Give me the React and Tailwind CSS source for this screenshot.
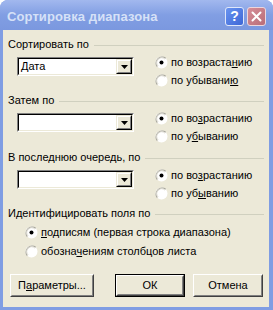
import React from "react";

function Radio({ checked }) {
  return (
    <svg width="13" height="13" viewBox="0 0 13 13" className="shrink-0">
      <circle cx="6.5" cy="6.5" r="6" fill="#ffffff" />
      <path d="M2.3 10.7 A6 6 0 0 1 10.7 2.3" fill="none" stroke="#a7a69c" strokeWidth="1.2" />
      <path d="M3.1 9.9 A4.8 4.8 0 0 1 9.9 3.1" fill="none" stroke="#dcdad0" strokeWidth="1" />
      {checked ? <circle cx="6.5" cy="6.5" r="2" fill="#000000" /> : null}
    </svg>
  );
}

function Option({ checked, children, className = "" }) {
  return (
    <div className={`flex h-[16px] items-center gap-[2px] ${className}`}>
      <Radio checked={checked} />
      <span className="pl-[1px]">{children}</span>
    </div>
  );
}

function Header({ children, className = "" }) {
  return (
    <div className={`flex h-[13px] items-center ${className}`}>
      <span className="whitespace-nowrap">{children}</span>
      <div className="ml-[5px] mt-[2px] h-px flex-1 bg-[#d0d0bf]" />
    </div>
  );
}

function Combo({ value }) {
  return (
    <div className="ml-[9px] mt-[3px] h-[19px] w-[117px] border border-t-[#808080] border-l-[#808080] border-r-white border-b-white">
      <div className="flex h-full border border-t-black border-l-black border-r-[#ece9d8] border-b-[#ece9d8] bg-white">
        <span className="flex-1 pl-[2px] leading-[15px]">{value}</span>
        <div className="h-full w-[16px] border border-t-[#ece9d8] border-l-[#ece9d8] border-r-black border-b-black">
          <div className="flex h-full items-center justify-center border border-t-white border-l-white border-r-[#808080] border-b-[#808080] bg-[#ece9d8]">
            <svg width="7" height="4" viewBox="0 0 7 4">
              <polygon points="0,0 7,0 3.5,4" fill="#000000" />
            </svg>
          </div>
        </div>
      </div>
    </div>
  );
}

function SortGroup({ value, asc, desc }) {
  return (
    <div className="mt-[3px] flex">
      <Combo value={value} />
      <div className="ml-[21px] flex flex-col gap-[2px]">
        <Option checked>{asc}</Option>
        <Option>{desc}</Option>
      </div>
    </div>
  );
}

function Button({ children, width, primary }) {
  return (
    <div className={`h-[23px] ${width} ${primary ? "border border-black" : ""}`}>
      <div className="h-full border border-t-white border-l-white border-r-[#404040] border-b-[#404040]">
        <div className="flex h-full items-center justify-center border border-t-[#ece9d8] border-l-[#ece9d8] border-r-[#808080] border-b-[#808080] bg-[#ece9d8]">
          {children}
        </div>
      </div>
    </div>
  );
}

export default function App() {
  return (
    <div className="h-[310px] w-[273px] bg-white font-['Liberation_Sans',Arial,sans-serif] text-[11px] leading-[13px] text-black">
      <div className="flex h-full flex-col rounded-t-[8px] bg-[#7f9de3]">
        <div className="flex h-[30px] items-center rounded-t-[8px] bg-gradient-to-b from-[#a2b8ee] via-[#819ee3] to-[#7b98df] pl-[7px] pr-[7px] pt-[2px]">
          <span className="flex-1 text-[13px] font-bold tracking-[0.1px] text-[#d6e1f7]">Сортировка диапазона</span>
          <div className="flex h-[19px] w-[19px] items-center justify-center rounded-[3px] border border-[#dfe7fa] bg-gradient-to-br from-[#6a94f0] to-[#3d66d6] text-[14px] font-bold text-white">
            ?
          </div>
          <div className="ml-[3px] flex h-[19px] w-[19px] items-center justify-center rounded-[3px] border border-[#ecd6dc] bg-gradient-to-br from-[#d68e98] to-[#b96d78]">
            <svg width="11" height="11" viewBox="0 0 11 11">
              <path d="M1.5 1.5 L9.5 9.5 M9.5 1.5 L1.5 9.5" stroke="#ffffff" strokeWidth="2" strokeLinecap="round" />
            </svg>
          </div>
        </div>
        <div className="mb-[3px] ml-[3px] mr-[4px] flex flex-1 flex-col bg-[#ece9d8] px-[5px] pt-[8px]">
          <Header>Сортировать по</Header>
          <SortGroup
            value="Дата"
            asc={<>по возраста<u>н</u>ию</>}
            desc={<>по убывани<u>ю</u></>}
          />

          <Header className="mt-[6px]">Затем по</Header>
          <SortGroup
            value=""
            asc={<>по во<u>з</u>растанию</>}
            desc={<>по у<u>б</u>ыванию</>}
          />

          <Header className="mt-[7px]">В последнюю очередь, по</Header>
          <SortGroup
            value=""
            asc={<>по во<u>з</u>растанию</>}
            desc={<>по уб<u>ы</u>ванию</>}
          />

          <Header className="mt-[6px]">Идентифицировать поля по</Header>
          <div className="ml-[17px] mt-[4px] flex flex-col gap-[3px]">
            <Option checked>
              <u>п</u>одписям (первая строка диапазона)
            </Option>
            <Option>
              обозна<u>ч</u>ениям столбцов листа
            </Option>
          </div>

          <div className="ml-[2px] mt-[15px] flex">
            <Button width="w-[84px]">
              П<u>а</u>раметры...
            </Button>
            <div className="ml-[21px]">
              <Button width="w-[70px]" primary>
                ОК
              </Button>
            </div>
            <div className="ml-[8px]">
              <Button width="w-[70px]">Отмена</Button>
            </div>
          </div>
        </div>
      </div>
    </div>
  );
}
